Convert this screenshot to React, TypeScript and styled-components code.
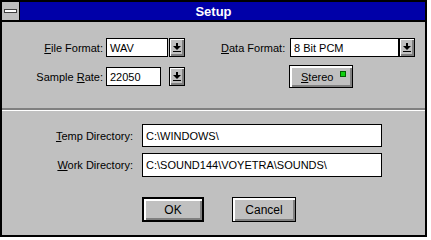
import React from "react";
import styled, {createGlobalStyle} from "styled-components";

const GlobalStyle = createGlobalStyle`
  body {
    margin: 0;
    background: #ffffff;
    font-family: "Liberation Sans", Arial, sans-serif;
  }
`;

// 드롭다운 화살표 (↓ + 밑줄)
const DropArrow = () => (
  <svg width="8" height="9" viewBox="0 0 8 9">
    <rect x="3" y="0" width="2" height="4" fill="#000" />
    <polygon points="0,3 8,3 4,7" fill="#000" />
    <rect x="0" y="8" width="8" height="1" fill="#000" />
  </svg>
);

const App = () => {
  return (
    <>
      <GlobalStyle />
      <Window>
        <TitleBar>
          <SysBox>
            <SysBar />
          </SysBox>
          <Title>Setup</Title>
        </TitleBar>
        <Body>
          <TopSection>
            <LeftCol>
              <Row>
                <Label $width={104}>
                  <u>F</u>ile Format:
                </Label>
                <TextBox $width={62}>WAV</TextBox>
                <DropButton $gap={1}>
                  <DropArrow />
                </DropButton>
              </Row>
              <Row>
                <Label $width={104}>
                  Sample <u>R</u>ate:
                </Label>
                <TextBox $width={55}>22050</TextBox>
                <DropButton $gap={8}>
                  <DropArrow />
                </DropButton>
              </Row>
            </LeftCol>
            <RightCol>
              <Row>
                <Label $width={69} $align="left">
                  <u>D</u>ata Format:
                </Label>
                <TextBox $width={109}>8 Bit PCM</TextBox>
                <DropButton $gap={0}>
                  <DropArrow />
                </DropButton>
              </Row>
              <StereoButton>
                <span>
                  <u>S</u>tereo
                </span>
                <Led />
              </StereoButton>
            </RightCol>
          </TopSection>
          <Separator />
          <BottomSection>
            <Row>
              <Label $width={140} $pad={9}>
                <u>T</u>emp Directory:
              </Label>
              <TextBox $width={240} $height={23}>
                C:\WINDOWS\
              </TextBox>
            </Row>
            <Row>
              <Label $width={140} $pad={9}>
                <u>W</u>ork Directory:
              </Label>
              <TextBox $width={240} $height={24}>
                C:\SOUND144\VOYETRA\SOUNDS\
              </TextBox>
            </Row>
            <ButtonRow>
              <PushButton $default>OK</PushButton>
              <PushButton>Cancel</PushButton>
            </ButtonRow>
          </BottomSection>
        </Body>
      </Window>
    </>
  );
};

export default App;

const Window = styled.div`
  width: 427px;
  height: 237px;
  box-sizing: border-box;
  border: 2px solid #000000;
  display: flex;
  flex-direction: column;
  background: #c0c0c0;
`;

const TitleBar = styled.div`
  height: 18px;
  display: flex;
  border-bottom: 2px solid #000000;
  flex-shrink: 0;
`;

const SysBox = styled.div`
  width: 17px;
  background: #c0c0c0;
  border-right: 1px solid #000000;
  display: flex;
  align-items: center;
  justify-content: center;
`;

const SysBar = styled.div`
  width: 11px;
  height: 2px;
  background: #ffffff;
  border: 1px solid #404040;
`;

const Title = styled.div`
  flex: 1;
  background: #0000a8;
  color: #ffffff;
  font-weight: bold;
  font-size: 13px;
  display: flex;
  align-items: center;
  justify-content: center;
  padding-right: 18px;
`;

const Body = styled.div`
  flex: 1;
  display: flex;
  flex-direction: column;
  font-size: 11px;
  color: #000000;
`;

const TopSection = styled.div`
  height: 86px;
  box-sizing: border-box;
  padding-top: 16px;
  display: flex;
`;

const LeftCol = styled.div`
  display: flex;
  flex-direction: column;
  gap: 10px;
`;

const RightCol = styled.div`
  margin-left: 36px;
  display: flex;
  flex-direction: column;
  gap: 8px;
`;

const Row = styled.div`
  display: flex;
  align-items: center;
`;

const Label = styled.div<{$width: number; $align?: string; $pad?: number}>`
  width: ${(p) => p.$width}px;
  box-sizing: border-box;
  text-align: ${(p) => p.$align || "right"};
  padding-right: ${(p) => (p.$pad ?? 3)}px;
  white-space: nowrap;
`;

const TextBox = styled.div<{$width: number; $height?: number}>`
  width: ${(p) => p.$width}px;
  height: ${(p) => p.$height || 19}px;
  box-sizing: border-box;
  background: #ffffff;
  border: 1px solid #000000;
  padding-left: 3px;
  display: flex;
  align-items: center;
  white-space: nowrap;
  overflow: hidden;
`;

const DropButton = styled.div<{$gap: number}>`
  width: 16px;
  height: 19px;
  box-sizing: border-box;
  margin-left: ${(p) => p.$gap}px;
  background: #c0c0c0;
  border: 1px solid #000000;
  box-shadow: inset 1px 1px 0 #ffffff, inset -2px -2px 0 #808080;
  display: flex;
  align-items: center;
  justify-content: center;
  padding: 0 1px 1px 0;
`;

const StereoButton = styled.div`
  margin-left: 68px;
  width: 64px;
  height: 23px;
  box-sizing: border-box;
  border: 1px solid #000000;
  background: #c0c0c0;
  box-shadow: inset 2px 2px 0 #ffffff, inset -2px -2px 0 #808080;
  display: flex;
  align-items: center;
  padding: 0 6px 0 11px;
  justify-content: space-between;
`;

const Led = styled.div`
  width: 4px;
  height: 4px;
  background: #10d010;
  border: 1px solid #006000;
  margin-bottom: 6px;
`;

const Separator = styled.div`
  height: 3px;
  box-sizing: border-box;
  border-top: 2px solid #808080;
  border-bottom: 1px solid #ffffff;
`;

const BottomSection = styled.div`
  padding-top: 13px;
  display: flex;
  flex-direction: column;
  gap: 6px;
`;

const ButtonRow = styled.div`
  display: flex;
  gap: 28px;
  padding-left: 140px;
  margin-top: 14px;
`;

const PushButton = styled.div<{$default?: boolean}>`
  width: ${(p) => (p.$default ? 62 : 64)}px;
  height: 25px;
  box-sizing: border-box;
  background: #c0c0c0;
  border: ${(p) => (p.$default ? 2 : 1)}px solid #000000;
  box-shadow: inset 2px 2px 0 #ffffff, inset -2px -2px 0 #808080;
  display: flex;
  align-items: center;
  justify-content: center;
  font-size: 12px;
`;
